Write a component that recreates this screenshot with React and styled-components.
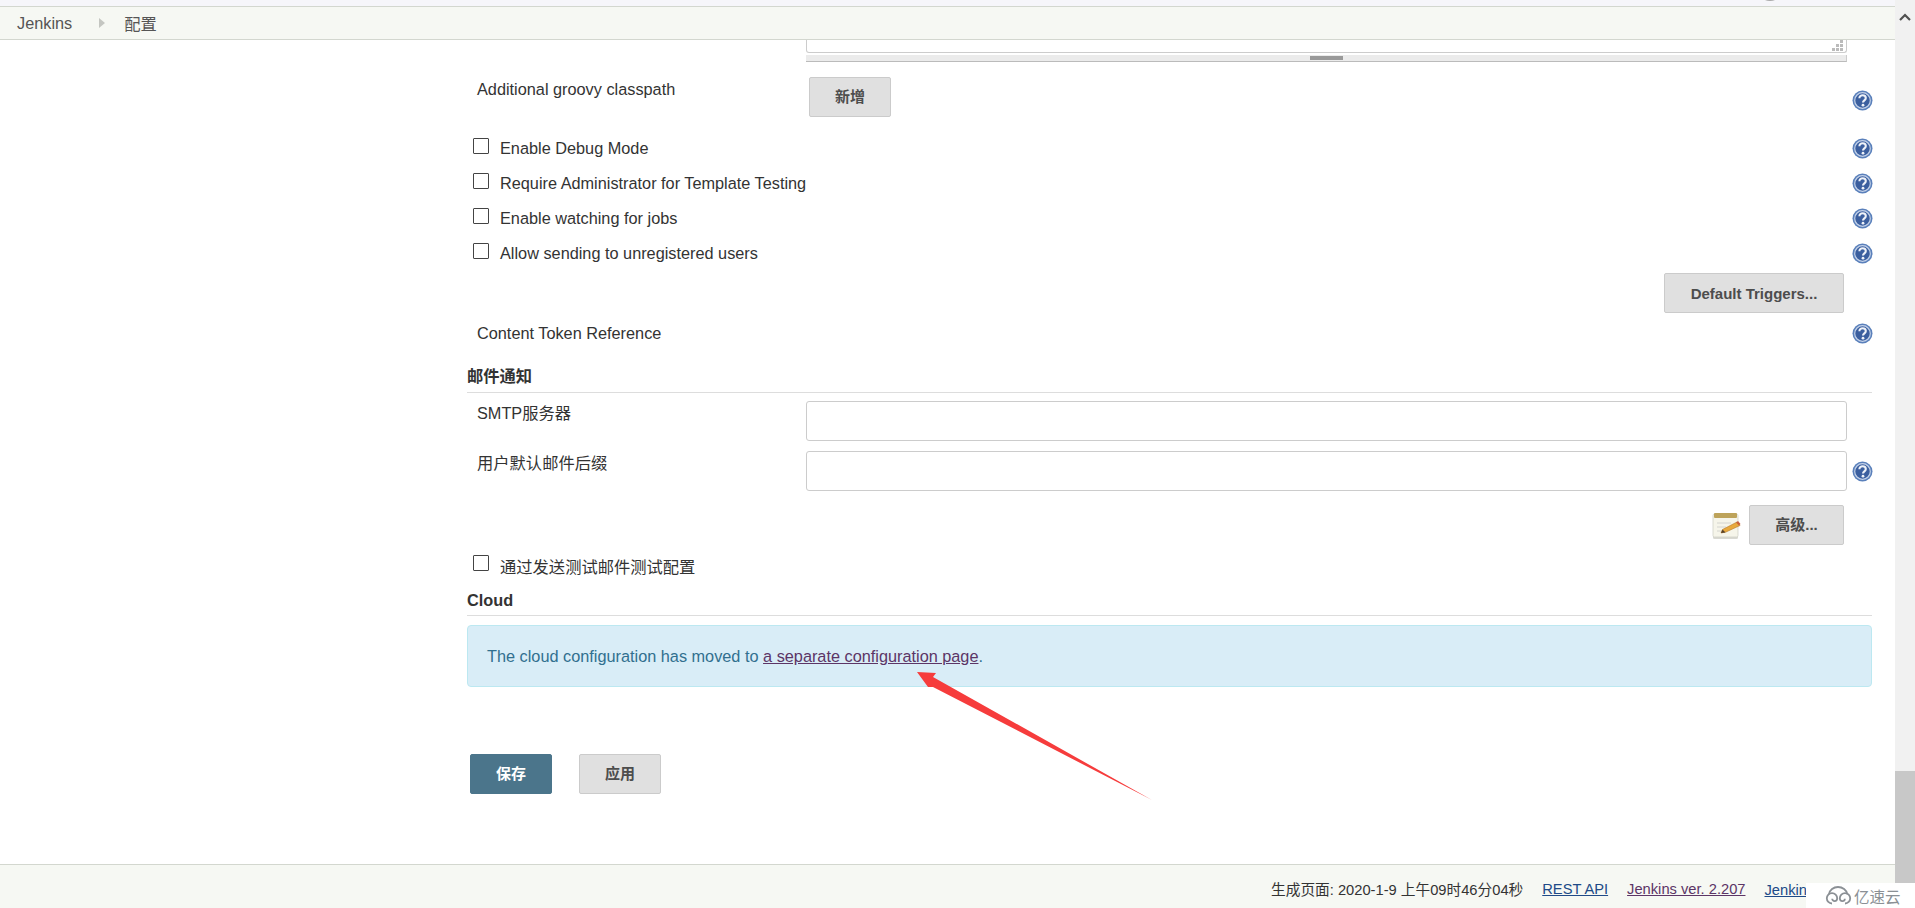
import React from "react";
import styled, { createGlobalStyle } from "styled-components";

const Global = createGlobalStyle`
  html, body { margin: 0; padding: 0; height: 100%; overflow: hidden; background: #fff; }
  body { font-family: "Liberation Sans", "Noto Sans CJK SC", Arial, sans-serif; font-size: 16.3px; color: #333; }
  * { box-sizing: border-box; }
`;
const Page = styled.div`position: relative; width: 1915px; height: 908px; overflow: hidden; display: flex; flex-direction: column;`;
const TopStrip = styled.div`height: 7px; background: #f6f6fa; border-bottom: 1px solid #d3d7cf; margin-right: 20px; flex: none;`;
const Crumbs = styled.nav`height: 33px; flex: none; background: #f6f8f3; border-bottom: 1px solid #d3d7cf; margin-right: 20px; display: flex; align-items: center; padding-left: 17px; font-size: 16.3px; color: #555;`;
const Crumb = styled.span`color: #555;`;
const Sep = styled.span`width: 0; height: 0; border-left: 6px solid #c4c6c1; border-top: 5px solid transparent; border-bottom: 5px solid transparent; margin: 0 19px 0 27px;`;
const Body = styled.div`flex: 1; display: flex; min-height: 0;`;
const Content = styled.main`width: 1895px; padding: 0 23px 0 467px; display: flex; flex-direction: column; flex: none;`;
const Bar = styled.aside`width: 20px; flex: none; background: #f1f1f1; display: flex; flex-direction: column; align-items: center; position: absolute; right: 0; top: 0; bottom: 0;`;
const Chevron = styled.svg`width: 20px; height: 20px; margin-top: 8px;`;
const Thumb = styled.div`width: 20px; height: 112px; margin-top: 743px; background: #c8c8c8;`;
const TextareaEnd = styled.div`margin-left: 339px; width: 1041px; height: 13px; background: #fff; border: 1px solid #ccc; border-top: 0; border-radius: 0 0 3px 3px; position: relative; flex: none;`;
const Grip = styled.svg`position: absolute; right: 2px; bottom: 1px; width: 12px; height: 11px;`;
const Resize = styled.div`margin-left: 339px; width: 1041px; height: 7px; margin-top: 2px; background: #ebebeb; border-bottom: 1px solid #bbb; border-right: 1px solid #ccc; display: flex; align-items: center; justify-content: center; flex: none;`;
const ResizeMark = styled.div`width: 33px; height: 4px; background: #999;`;
const Row = styled.div`display: flex; align-items: flex-start; position: relative; height: ${p => p.$h}px; margin-top: ${p => p.$mt || 0}px; flex: none;`;
const Label = styled.div`width: 339px; padding-left: 10px; padding-top: ${p => p.$pt || 0}px; line-height: 20px; color: #333; flex: none;`;
const Help = styled.svg`position: absolute; left: 1385px; top: ${p => p.$top}px; width: 21px; height: 21px;`;
const Btn = styled.button`
  width: ${p => p.$w}px; height: 40px; font: bold 15px "Liberation Sans", "Noto Sans CJK SC", sans-serif;
  color: ${p => p.$primary ? "#fff" : "#4d4d4d"}; background: ${p => p.$primary ? "#4b758b" : "#e0e0e0"};
  border: 1px solid ${p => p.$primary ? "#4b758b" : "#cbcbcb"}; border-radius: 2px; padding: 0 0 ${p => p.$cjk ? 3 : 0}px; cursor: pointer; flex: none;
  margin-left: ${p => p.$ml || 0}px;
`;
const CheckRow = styled.div`display: flex; align-items: center; height: 35px; padding-left: 6px; flex: none; color: #333; position: relative; margin-top: ${p => p.$mt || 0}px;`;
const Box = styled.span`width: 16px; height: 16px; border: 1px solid #444; background: #fff; margin-right: 11px; margin-top: -6px; flex: none; border-radius: 1px;`;
const Right = styled.div`display: flex; justify-content: flex-end; align-items: center; gap: 8px; padding-right: 28px; flex: none; margin-top: ${p => p.$mt || 0}px;`;
const Section = styled.div`font-weight: bold; font-size: 16.3px; line-height: 20px; color: #333; border-bottom: 1px solid #ddd; height: ${p => p.$h}px; margin-top: ${p => p.$mt || 0}px; flex: none;`;
const Input = styled.div`width: 1041px; height: ${p => p.$h}px; border: 1px solid #ccc; border-radius: 3px; background: #fff; flex: none;`;
const Alert = styled.div`margin-top: 9px; height: 62px; background: #d9edf7; border: 1px solid #bce8f1; border-radius: 4px; color: #31708f; display: flex; align-items: center; padding-left: 19px; padding-top: 1px; flex: none;`;
const AlertLink = styled.a`color: #5c3566; text-decoration: underline;`;
const Actions = styled.div`display: flex; gap: 27px; padding-left: 3px; margin-top: 67px; flex: none;`;
const Footer = styled.footer`position: absolute; left: 0; right: 108px; bottom: 0; height: 44px; background: #f6f8f3; border-top: 1px solid #d3d7cf; display: flex; align-items: center; gap: 19px; font-size: 14.7px; color: #333; overflow: hidden; padding-top: 4px; padding-left: 1271px;`;
const FooterEnd = styled.div`position: absolute; left: 1807px; right: 20px; bottom: 0; height: 44px; background: #f6f8f3; border-top: 1px solid #d3d7cf;`;
const FootLink = styled.a`color: ${p => p.$visited ? "#5c3566" : "#204a87"}; text-decoration: underline; white-space: nowrap; flex: none;`;
const FootText = styled.span`white-space: nowrap; flex: none;`;
const Watermark = styled.div`position: absolute; right: 0; bottom: 0; width: 109px; height: 25px; background: #fff; display: flex; align-items: center; padding-left: 19px; gap: 2px; color: #8b9095; font-size: 15.5px; white-space: nowrap;`;
const Overlay = styled.svg`position: absolute; left: 900px; top: 650px; width: 300px; height: 160px; pointer-events: none;`;
const TopBlob = styled.div`position: absolute; left: 1762px; top: -8px; width: 16px; height: 9px; background: #aaa; border-radius: 50%;`;

const HelpIcon = ({ top }) => (
  <Help $top={top} viewBox="0 0 21 21">
    <circle cx="10.5" cy="10.5" r="10" fill="#5a80bb" />
    <circle cx="10.5" cy="10.5" r="7.8" fill="#3b5f9f" stroke="#c3d1e8" strokeWidth="1.2" />
    <path d="M7.4 8.2c0-1.9 1.5-3 3.2-3s3.2 1.1 3.2 2.8c0 2.3-2.8 2.3-2.8 4.4" fill="none" stroke="#eef2f8" strokeWidth="2.1" />
    <circle cx="11" cy="15.2" r="1.4" fill="#eef2f8" />
  </Help>
);

const Notepad = () => (
  <svg width="29" height="29" viewBox="0 0 29 29" style={{ flex: "none" }}>
    <rect x="1" y="5" width="25" height="23" rx="1.5" fill="#d9d9d2" />
    <rect x="1" y="3" width="25" height="23" rx="1.5" fill="#f6f5ea" stroke="#d2d2c8" strokeWidth=".8" />
    <rect x="2" y="2" width="23" height="5" rx="1" fill="#bda35a" />
    <path d="M5 12h14M5 16h9M5 20h6" stroke="#d4d4cf" strokeWidth="1" />
    <path d="M9 22l1.5-3.5L25 11l3 3.5-14 6.5z" fill="#e8a93c" stroke="#b5792a" strokeWidth=".6" />
    <path d="M9 22l1.5-3.5 3 3z" fill="#55402a" />
    <path d="M24 11.5l2-1.5 2.5 3-1.5 1.5z" fill="#c9603a" />
  </svg>
);

export default function App() {
  return (
    <Page>
      <Global />
      <TopStrip />
      <TopBlob />
      <Crumbs>
        <Crumb>Jenkins</Crumb><Sep /><Crumb>配置</Crumb>
      </Crumbs>
      <Body>
        <Content>
          <TextareaEnd>
            <Grip viewBox="0 0 12 11">
              <g fill="#bbb">
                <rect x="8" y="0" width="3" height="3" /><rect x="4" y="4" width="3" height="3" /><rect x="8" y="4" width="3" height="3" />
                <rect x="0" y="8" width="3" height="3" /><rect x="4" y="8" width="3" height="3" /><rect x="8" y="8" width="3" height="3" />
              </g>
            </Grip>
          </TextareaEnd>
          <Resize><ResizeMark /></Resize>
          <Row $h={54} $mt={15}>
            <Label $pt={2}>Additional groovy classpath</Label>
            <Btn $w={82} $ml={3} $cjk>新增</Btn>
            <HelpIcon top={13} />
          </Row>
          <CheckRow><Box />Enable Debug Mode<HelpIcon top={7} /></CheckRow>
          <CheckRow><Box />Require Administrator for Template Testing<HelpIcon top={7} /></CheckRow>
          <CheckRow><Box />Enable watching for jobs<HelpIcon top={7} /></CheckRow>
          <CheckRow><Box />Allow sending to unregistered users<HelpIcon top={7} /></CheckRow>
          <Right $mt={2}><Btn $w={180}>Default Triggers...</Btn></Right>
          <Row $h={43} $mt={10}>
            <Label>Content Token Reference</Label>
            <HelpIcon top={0} />
          </Row>
          <Section $h={27}>邮件通知</Section>
          <Row $h={50} $mt={8}>
            <Label $pt={2}>SMTP服务器</Label>
            <Input $h={40} />
          </Row>
          <Row $h={54}>
            <Label $pt={2}>用户默认邮件后缀</Label>
            <Input $h={40} />
            <HelpIcon top={10} />
          </Row>
          <Right><Notepad /><Btn $w={95} $cjk>高级...</Btn></Right>
          <CheckRow $mt={3}><Box />通过发送测试邮件测试配置</CheckRow>
          <Section $h={26} $mt={7}>Cloud</Section>
          <Alert>
            <span>The cloud configuration has moved to <AlertLink href="#">a separate configuration page</AlertLink>.</span>
          </Alert>
          <Actions>
            <Btn $w={82} $primary $cjk>保存</Btn>
            <Btn $w={82} $cjk>应用</Btn>
          </Actions>
        </Content>
      </Body>
      <Bar>
        <Chevron viewBox="0 0 20 20"><path d="M5 12l5-5 5 5" fill="none" stroke="#505050" strokeWidth="2.2" /></Chevron>
        <Thumb />
      </Bar>
      <FooterEnd />
      <Footer>
        <FootText>生成页面: 2020-1-9 上午09时46分04秒</FootText>
        <FootLink href="#">REST API</FootLink>
        <FootLink href="#" $visited>Jenkins ver. 2.207</FootLink>
        <FootLink href="#">Jenkins 中文社区</FootLink>
      </Footer>
      <Watermark>
        <svg width="27" height="19" viewBox="0 0 27 19" style={{ flex: "none" }}>
          <g fill="none" stroke="#8b9095" strokeWidth="1.8">
            <path d="M7 17.5a5.2 5.2 0 1 1 5.2-5.2c0 1.6-1 2.8-2.6 2.8a2.4 2.4 0 0 1-2.4-2.4" />
            <path d="M20 17.5a5.2 5.2 0 1 0-5.2-5.2c0 1.6 1 2.8 2.6 2.8a2.4 2.4 0 0 0 2.4-2.4" />
            <path d="M4 8.2C4.6 4 8.5 1 13 1s8.6 3 9.4 7.4" />
          </g>
        </svg>
        <span>亿速云</span>
      </Watermark>
      <Overlay viewBox="0 0 300 160">
        <path d="M17 22 L36 23 L33 27 L252 150 L33 37 L28 37 Z" fill="#f63c3c" />
      </Overlay>
    </Page>
  );
}
